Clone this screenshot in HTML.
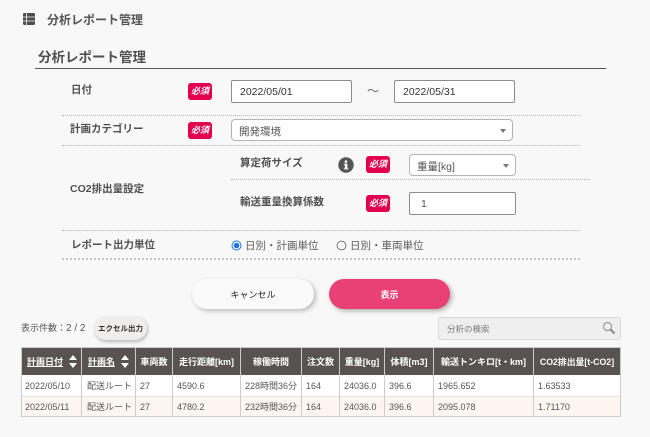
<!DOCTYPE html>
<html lang="ja"><head><meta charset="utf-8"><style>
html,body{margin:0;padding:0}
body{width:650px;height:437px;background:#f8f8f8;position:relative;overflow:hidden;font-family:"Liberation Sans","Noto Sans CJK JP",sans-serif;color:#4a4a4a}
.a{position:absolute;white-space:nowrap;line-height:1}
.b{font-weight:700;font-size:10.5px;color:#505050}
.req{position:absolute;width:24px;height:17px;background:#e2004f;border-radius:3px;color:#fff;font-size:9px;font-weight:700;line-height:17px;text-align:center;font-style:italic}
.inp{position:absolute;box-sizing:border-box;background:#fff;border:1px solid #8c8c8c;border-radius:2px;font-size:10.5px;color:#333;padding-left:8px}
.sel{border:1px solid #b4b4b4;border-radius:4px;color:#555}
.dot{position:absolute;height:0;border-top:1px dotted #b4b4b4}
.dot2{position:absolute;height:0;border-top:2px dotted #c4c4c4}
.arr{position:absolute;width:0;height:0;border-left:3.5px solid transparent;border-right:3.5px solid transparent;border-top:4px solid #777}
.th{position:absolute;top:348px;height:27px;background:#595252;color:#fff;font-size:9px;font-weight:700;line-height:28px;text-align:center;border-right:1px solid #ccc;box-sizing:border-box;white-space:nowrap}
.td{position:absolute;height:21px;box-sizing:border-box;border-right:1px solid #ccc;font-size:9px;color:#555;line-height:23px;padding-left:4px;white-space:nowrap}
.u{text-decoration:underline}
.up{position:absolute;width:0;height:0;border-left:4px solid transparent;border-right:4px solid transparent;border-bottom:5px solid #fff}
.dn{position:absolute;width:0;height:0;border-left:4px solid transparent;border-right:4px solid transparent;border-top:5px solid #fff}
</style></head><body>
<svg class="a" style="left:23px;top:13px" width="12" height="12" viewBox="0 0 12 12"><rect x="0" y="0" width="12" height="12" rx="1.5" fill="#4d4d4d"/><path d="M0 4h12M0 8h12M3.5 0v12" stroke="#f8f8f8" stroke-width=".8"/></svg>
<div class="a b" style="left:47px;top:14px;font-size:12px;color:#555">分析レポート管理</div>
<div class="a b" style="left:38px;top:51px;font-size:13.5px;color:#505050">分析レポート管理</div>
<div style="position:absolute;left:35px;top:68px;width:571px;height:1px;background:#555"></div>

<div class="a b" style="left:71px;top:85px">日付</div>
<div class="req" style="left:188px;top:83px">必須</div>
<div class="inp" style="left:231px;top:80px;width:121px;height:23px;line-height:23px">2022/05/01</div>
<div class="a" style="left:367px;top:85px;font-size:12px;color:#666">～</div>
<div class="inp" style="left:394px;top:80px;width:121px;height:23px;line-height:23px">2022/05/31</div>
<div class="dot" style="left:62px;top:115px;width:518px"></div>

<div class="a b" style="left:70px;top:124px">計画カテゴリー</div>
<div class="req" style="left:188px;top:122px">必須</div>
<div class="inp sel" style="left:231px;top:119px;width:282px;height:22px;line-height:24px;padding-left:7px">開発環境</div>
<div class="arr" style="left:500px;top:129px"></div>
<div class="dot" style="left:62px;top:145px;width:518px"></div>

<div class="a b" style="left:70px;top:184px">CO2排出量設定</div>
<div class="a b" style="left:240px;top:158px">算定荷サイズ</div>
<svg class="a" style="left:338px;top:157px" width="16" height="16" viewBox="0 0 16 16"><circle cx="8" cy="8" r="7.7" fill="#555"/><rect x="6.8" y="7" width="2.6" height="5" fill="#fff"/><rect x="5.8" y="11.4" width="4.6" height="1" fill="#fff"/><rect x="5.8" y="6.6" width="3" height="1" fill="#fff"/><circle cx="8" cy="4.6" r="1.3" fill="#fff"/></svg>
<div class="req" style="left:366px;top:156px">必須</div>
<div class="inp sel" style="left:409px;top:154px;width:107px;height:22px;line-height:24px;padding-left:7px">重量[kg]</div>
<div class="arr" style="left:503px;top:164px"></div>
<div class="dot" style="left:231px;top:179px;width:358px"></div>
<div class="a b" style="left:240px;top:197px">輸送重量換算係数</div>
<div class="req" style="left:366px;top:195px">必須</div>
<div class="inp" style="left:409px;top:192px;width:107px;height:23px;line-height:22px;color:#555;padding-left:11px">1</div>
<div class="dot" style="left:62px;top:230px;width:518px"></div>

<div class="a b" style="left:71px;top:240px">レポート出力単位</div>
<svg class="a" style="left:231px;top:240px" width="11" height="11" viewBox="0 0 11 11"><circle cx="5.5" cy="5.5" r="4.5" fill="#fff" stroke="#1a73e8" stroke-width="1"/><circle cx="5.5" cy="5.5" r="2.8" fill="#1a73e8"/></svg>
<div class="a" style="left:245px;top:241px;font-size:10.5px;color:#5a5a5a">日別・計画単位</div>
<svg class="a" style="left:336px;top:240px" width="11" height="11" viewBox="0 0 11 11"><circle cx="5.5" cy="5.5" r="4.4" fill="#fff" stroke="#777" stroke-width="1"/></svg>
<div class="a" style="left:350px;top:241px;font-size:10.5px;color:#5a5a5a">日別・車両単位</div>
<div class="dot2" style="left:62px;top:258px;width:518px"></div>

<div style="position:absolute;left:192px;top:279px;width:122px;height:30px;border-radius:15px;background:#fafafa;box-shadow:2px 2px 5px rgba(0,0,0,.25);color:#222;font-size:9px;text-align:center;line-height:32px">キャンセル</div>
<div style="position:absolute;left:329px;top:279px;width:121px;height:30px;border-radius:15px;background:#e94077;box-shadow:2px 2px 5px rgba(0,0,0,.3);color:#fff;font-size:9px;font-weight:700;text-align:center;line-height:32px">表示</div>

<div class="a" style="left:21px;top:324px;font-size:9px;color:#555">表示件数：<span style="font-size:10px">2 / 2</span></div>
<div style="position:absolute;left:94px;top:316px;width:53px;height:24px;border-radius:12px;background:#efeeec;box-shadow:1px 2px 3px rgba(0,0,0,.25);color:#333;font-size:7.5px;font-weight:700;text-align:center;line-height:25px">エクセル出力</div>
<div style="position:absolute;box-sizing:border-box;left:438px;top:317px;width:183px;height:23px;background:#efefef;border:1px solid #d8d8d8;border-radius:3px;color:#777;font-size:8.5px;line-height:22px;padding-left:8px">分析の検索</div>
<svg class="a" style="left:602px;top:321px" width="14" height="14" viewBox="0 0 14 14"><circle cx="5.5" cy="5.5" r="4" fill="none" stroke="#999" stroke-width="1.2"/><path d="M8.5 8.5l4 4" stroke="#888" stroke-width="2"/></svg>

<div style="position:absolute;left:21px;top:347px;width:600px;height:70px;background:#fff;border:1px solid #ccc;box-sizing:border-box"></div>
<div class="th" style="left:21px;width:61px;text-align:left;padding-left:5px;border-left:1px solid #ccc"><span class="u">計画日付</span></div>
<div class="up" style="left:69px;top:355px"></div><div class="dn" style="left:69px;top:363px"></div>
<div class="th" style="left:82px;width:54px;text-align:left;padding-left:6px"><span class="u">計画名</span></div>
<div class="up" style="left:121px;top:355px"></div><div class="dn" style="left:121px;top:363px"></div>
<div class="th" style="left:136px;width:37px">車両数</div>
<div class="th" style="left:173px;width:68px">走行距離[km]</div>
<div class="th" style="left:241px;width:61px">稼働時間</div>
<div class="th" style="left:302px;width:38px">注文数</div>
<div class="th" style="left:340px;width:45px">重量[kg]</div>
<div class="th" style="left:385px;width:49px">体積[m3]</div>
<div class="th" style="left:434px;width:100px">輸送トンキロ[t・km]</div>
<div class="th" style="left:534px;width:87px;border-right:1px solid #ccc;font-size:8.8px">CO2排出量[t-CO2]</div>

<div style="position:absolute;left:22px;top:396px;width:598px;height:20px;background:#fdf6f0"></div>
<div style="position:absolute;left:22px;top:396px;width:598px;height:1px;background:#e4e4e4"></div>

<div class="td" style="left:21px;top:375px;width:61px">2022/05/10</div>
<div class="td" style="left:82px;top:375px;width:54px;padding-left:5px">配送ルート</div>
<div class="td" style="left:136px;top:375px;width:37px">27</div>
<div class="td" style="left:173px;top:375px;width:68px">4590.6</div>
<div class="td" style="left:241px;top:375px;width:61px">228時間36分</div>
<div class="td" style="left:302px;top:375px;width:38px">164</div>
<div class="td" style="left:340px;top:375px;width:45px">24036.0</div>
<div class="td" style="left:385px;top:375px;width:49px">396.6</div>
<div class="td" style="left:434px;top:375px;width:100px">1965.652</div>
<div class="td" style="left:534px;top:375px;width:87px">1.63533</div>

<div class="td" style="left:21px;top:396px;width:61px">2022/05/11</div>
<div class="td" style="left:82px;top:396px;width:54px;padding-left:5px">配送ルート</div>
<div class="td" style="left:136px;top:396px;width:37px">27</div>
<div class="td" style="left:173px;top:396px;width:68px">4780.2</div>
<div class="td" style="left:241px;top:396px;width:61px">232時間36分</div>
<div class="td" style="left:302px;top:396px;width:38px">164</div>
<div class="td" style="left:340px;top:396px;width:45px">24036.0</div>
<div class="td" style="left:385px;top:396px;width:49px">396.6</div>
<div class="td" style="left:434px;top:396px;width:100px">2095.078</div>
<div class="td" style="left:534px;top:396px;width:87px">1.71170</div>
</body></html>
